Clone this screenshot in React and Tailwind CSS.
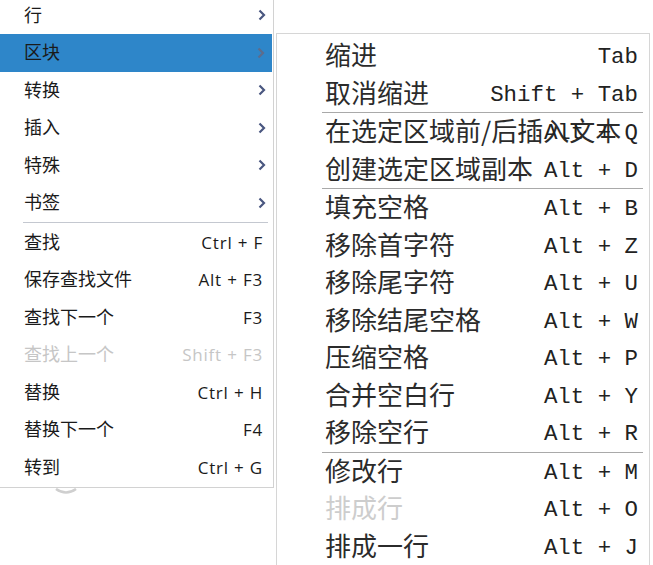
import React from 'react';

const LEFT_ITEMS = [
  { label: '行', sub: true },
  { label: '区块', sub: true, active: true },
  { label: '转换', sub: true },
  { label: '插入', sub: true },
  { label: '特殊', sub: true },
  { label: '书签', sub: true },
  { sep: true },
  { label: '查找', keys: 'Ctrl + F' },
  { label: '保存查找文件', keys: 'Alt + F3' },
  { label: '查找下一个', keys: 'F3' },
  { label: '查找上一个', keys: 'Shift + F3', disabled: true },
  { label: '替换', keys: 'Ctrl + H' },
  { label: '替换下一个', keys: 'F4' },
  { label: '转到', keys: 'Ctrl + G' },
];

const BLOCK_ITEMS = [
  { label: '缩进', keys: 'Tab' },
  { label: '取消缩进', keys: 'Shift + Tab' },
  { sep: true },
  { label: '在选定区域前/后插入文本', keys: 'Alt + Q' },
  { label: '创建选定区域副本', keys: 'Alt + D' },
  { sep: true },
  { label: '填充空格', keys: 'Alt + B' },
  { label: '移除首字符', keys: 'Alt + Z' },
  { label: '移除尾字符', keys: 'Alt + U' },
  { label: '移除结尾空格', keys: 'Alt + W' },
  { label: '压缩空格', keys: 'Alt + P' },
  { label: '合并空白行', keys: 'Alt + Y' },
  { label: '移除空行', keys: 'Alt + R' },
  { sep: true },
  { label: '修改行', keys: 'Alt + M' },
  { label: '排成行', keys: 'Alt + O', disabled: true },
  { label: '排成一行', keys: 'Alt + J' },
];

const Chevron = ({ muted }) => (
  <svg width="8" height="12" viewBox="0 0 8 12" className="-mr-[3px]">
    <path d="M1.5 1.5 L6 6 L1.5 10.5" fill="none" stroke={muted ? '#5d6c8c' : '#4a5780'} strokeWidth="2.2" />
  </svg>
);

const App = () => {
  return (
    <div className="w-[653px] h-[565px] overflow-hidden bg-white flex font-['Open_Sans','Noto_Sans_CJK_SC',sans-serif]">
      {/* main menu */}
      <div className="w-[274px] shrink-0 flex flex-col">
        <div className="-mt-[3.5px] bg-white border-r border-b border-[#d2d2d2] flex flex-col pb-px">
          {LEFT_ITEMS.map((item, i) =>
            item.sep ? (
              <div key={i} className="h-[2px] flex items-start">
                <div className="ml-[23px] mr-[5px] flex-1 h-px bg-[#c4c8d0]"></div>
              </div>
            ) : (
              <div
                key={i}
                className={`h-[37.5px] flex items-center justify-between pl-[24px] pr-[10px] text-[18px] ${item.active ? 'bg-[#2e86c9] mr-px' : ''} ${item.disabled ? 'text-[#c6c6c6]' : 'text-[#1a1a1a]'}`}
              >
                <span className="whitespace-nowrap">{item.label}</span>
                {item.sub ? <Chevron muted={item.active} /> : <span className="whitespace-pre text-[17px] tracking-[0.8px]">{item.keys}</span>}
              </div>
            )
          )}
        </div>
        <div className="pl-[55px]">
          <svg width="22" height="6" viewBox="0 0 22 6">
            <path d="M1 1 Q11 8 21 1" fill="none" stroke="#cfcfcf" strokeWidth="2.5" />
          </svg>
        </div>
      </div>

      {/* 区块 submenu */}
      <div className="ml-[2px] mt-[33px] w-[374px] shrink-0 min-w-0 bg-white border-l border-t border-r border-[#d6d6d6] pt-[3px] flex flex-col">
        {BLOCK_ITEMS.map((item, i) =>
          item.sep ? (
            <div key={i} className="ml-[45px] mr-[6px] h-px bg-[#a9a9a9]"></div>
          ) : (
            <div key={i} className="h-[37.5px] flex items-center pl-[48px] pr-[11px] min-w-0">
              <span className={`flex-1 min-w-0 whitespace-nowrap leading-none pb-[3px] text-[26px] font-['Noto_Sans_CJK_SC',sans-serif] ${item.disabled ? 'text-[#cdcdcd]' : 'text-[#2b2b2b]'}`}>
                {item.label}
              </span>
              <span className="shrink-0 whitespace-pre leading-none pt-[3px] text-[22.4px] text-[#222] font-['Liberation_Mono',monospace]">{item.keys}</span>
            </div>
          )
        )}
      </div>
    </div>
  );
};

export default App;
